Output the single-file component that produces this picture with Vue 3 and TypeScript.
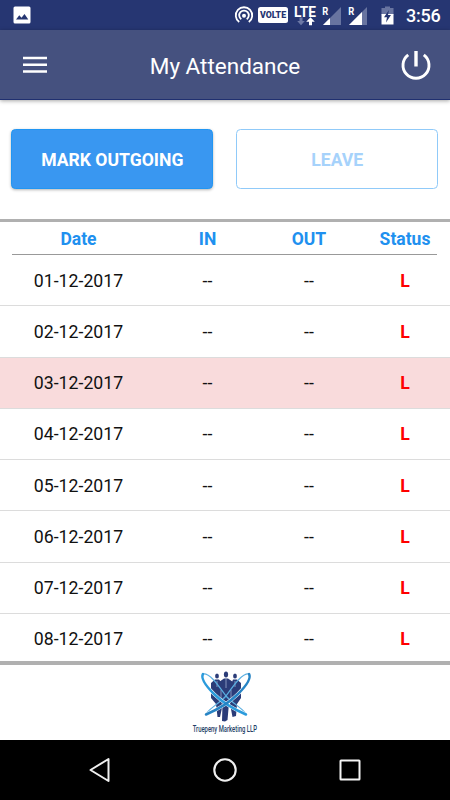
<script setup lang="ts">
interface AttendanceRow {
  date: string
  timeIn: string
  timeOut: string
  status: string
  holiday: boolean
}

const columns: string[] = ['Date', 'IN', 'OUT', 'Status']

const rows: AttendanceRow[] = Array.from({ length: 8 }, (_, i) => ({
  date: `0${i + 1}-12-2017`,
  timeIn: '--',
  timeOut: '--',
  status: 'L',
  holiday: i === 2,
}))
</script>

<template>
  <div class="screen">
    <div class="status-bar">
      <svg class="picture" width="18" height="18" viewBox="0 0 18 18">
        <rect x="0.5" y="0.5" width="17" height="17" rx="1.5" fill="#fff" />
        <path d="M3 13.5 6.3 9.3 8.5 11.8 11.5 8 15.3 13.5Z" fill="#263672" />
      </svg>
      <svg class="hotspot" width="20" height="20" viewBox="0 0 20 20">
        <g fill="none" stroke="#fff" stroke-width="1.8">
          <path d="M5.2 17.1A8.2 8.2 0 1 1 14.8 17.1" />
          <path d="M7.3 14.3A4.8 4.8 0 1 1 12.7 14.3" />
        </g>
        <circle cx="10" cy="10.8" r="2" fill="#fff" />
      </svg>
      <span class="volte">VOLTE</span>
      <svg class="lte" width="24" height="22" viewBox="0 0 24 22">
        <text x="1" y="12.5" class="lte-label" textLength="22" lengthAdjust="spacingAndGlyphs">LTE</text>
        <path d="M6.5 13.5h3v3.5h2.3L8 21.3 4.2 17h2.3Z" fill="#6c78a5" />
        <path d="M16 21.3v-3.5h-2.8L17.5 13.3 21.8 17.8H19v3.5Z" fill="#fff" />
      </svg>
      <svg class="signal" width="20" height="20" viewBox="0 0 20 20">
        <path d="M19 1V19H1Z" fill="#6874a0" />
        <path d="M8 12V19H1Z" fill="#fff" />
        <text x="0.3" y="9" class="roam" textLength="6" lengthAdjust="spacingAndGlyphs">R</text>
      </svg>
      <svg class="signal second" width="20" height="20" viewBox="0 0 20 20">
        <path d="M19 1V19H1Z" fill="#6874a0" />
        <path d="M14 6V19H1Z" fill="#fff" />
        <text x="0.3" y="9" class="roam" textLength="6" lengthAdjust="spacingAndGlyphs">R</text>
      </svg>
      <svg class="battery" width="13" height="19" viewBox="0 0 13 19">
        <path d="M4 0.5h5V2h3.5v7h-12V2H4Z" fill="#6874a0" />
        <path d="M0.5 8h12v10.5h-12Z" fill="#fff" />
        <path d="M8 4 3 11.3h3L5 16.5 10 9H7Z" fill="#263672" />
      </svg>
      <span class="clock">3:56</span>
    </div>

    <header class="app-bar">
      <svg class="menu" width="24" height="18" viewBox="0 0 24 18">
        <path d="M0 2H24M0 8.7H24M0 15.4H24" stroke="#fff" stroke-width="2.5" />
      </svg>
      <h1 class="title">My Attendance</h1>
      <svg class="power" width="30" height="30" viewBox="0 0 30 30">
        <path d="M7.2 4.9A13 13 0 1 0 22.8 4.9" fill="none" stroke="#fff" stroke-width="2.9" />
        <path d="M15 1V16.5" stroke="#fff" stroke-width="3.4" />
      </svg>
    </header>

    <section class="actions">
      <button class="btn primary" type="button">MARK OUTGOING</button>
      <button class="btn outline" type="button">LEAVE</button>
    </section>

    <main class="attendance">
      <div class="grid head">
        <span v-for="name in columns" :key="name">{{ name }}</span>
      </div>
      <div v-for="row in rows" :key="row.date" class="grid row" :class="{ holiday: row.holiday }">
        <span>{{ row.date }}</span>
        <span>{{ row.timeIn }}</span>
        <span>{{ row.timeOut }}</span>
        <span class="code">{{ row.status }}</span>
      </div>
    </main>

    <footer class="brand">
      <svg width="64" height="53" viewBox="0 0 64 53">
        <g fill="#2b3c78">
          <ellipse cx="23" cy="6" rx="1.9" ry="2.5" />
          <ellipse cx="32" cy="4.5" rx="2.1" ry="2.9" />
          <ellipse cx="41" cy="6" rx="1.9" ry="2.5" />
          <path d="M17 13 21 9.5H25L27 12 28 38 26 47 23.5 47 22 34 17 28Z" />
          <path d="M25 12 30 8.5H34L39 12 38.500 29 35 33 33.500 50 31 51.500 28 51 28.500 34 26 28Z" />
          <path d="M38 12 39 9.500H43L47 13 47 28 43 34 42 46 38.500 47 36 34Z" />
        </g>
        <path d="M32 9V18M23 11V17M41 11V17M27 20V29M37 20V29" stroke="#a9b8da" stroke-width="0.7" />
        <g fill="none">
          <path d="M9 4C16 3 24 15 32 26 39 34 53 41 52 45" stroke="#5aaee0" stroke-width="1.2" />
          <path d="M55 4C48 3 40 15 32 26 25 34 11 41 12 45" stroke="#5aaee0" stroke-width="1.2" />
          <path d="M9 4C6 9 14 18 20 24 28 32 37 38 52 44.5" stroke="#fff" stroke-width="3.4" />
          <path d="M55 4C58 9 50 18 44 24 36 32 27 38 12 44.5" stroke="#fff" stroke-width="3.4" />
          <path d="M9 4C6 9 14 18 20 24 28 32 37 38 52 44.5" stroke="#2b9bdc" stroke-width="2.5" stroke-linecap="round" />
          <path d="M55 4C58 9 50 18 44 24 36 32 27 38 12 44.5" stroke="#2784c4" stroke-width="2.5" stroke-linecap="round" />
        </g>
      </svg>
      <span class="brand-name">Truepeny Marketing LLP</span>
    </footer>

    <nav class="nav-bar">
      <svg width="24" height="26" viewBox="0 0 24 26">
        <path d="M20.5 2V24L2.5 13Z" fill="none" stroke="#f0f0f0" stroke-width="2" stroke-linejoin="round" />
      </svg>
      <svg width="26" height="26" viewBox="0 0 26 26">
        <circle cx="13" cy="13" r="10.7" fill="none" stroke="#f0f0f0" stroke-width="2.1" />
      </svg>
      <svg width="24" height="26" viewBox="0 0 24 26">
        <rect x="2.5" y="3.5" width="19" height="19" rx="0.5" fill="none" stroke="#f4f4f4" stroke-width="2" />
      </svg>
    </nav>
  </div>
</template>

<style>
body {
  margin: 0;
  background: #fff;
}
</style>

<style scoped>
.screen {
  display: flex;
  flex-direction: column;
  box-sizing: border-box;
  width: 450px;
  height: 800px;
  overflow: hidden;
  background: #fff;
  color: #111;
  font-family: Roboto, "Liberation Sans", sans-serif;
}

svg {
  display: block;
  flex: none;
}

.status-bar {
  display: flex;
  align-items: center;
  flex: none;
  box-sizing: border-box;
  height: 30px;
  padding: 0 9px 0 13px;
  background: #263672;
  color: #fff;
}

.hotspot {
  margin-left: auto;
}

.volte {
  box-sizing: border-box;
  width: 30px;
  height: 16px;
  margin-left: 4px;
  border-radius: 2.5px;
  background: #fff;
  color: #263672;
  font-size: 8.8px;
  font-weight: 900;
  line-height: 16px;
  text-align: center;
}

.lte {
  margin-left: 5px;
}

.lte-label {
  fill: #fff;
  font-size: 14px;
  font-weight: 700;
}

.signal {
  margin-left: 5px;
  margin-top: 2px;
}

.signal.second {
  margin-left: 6px;
}

.roam {
  fill: #fff;
  font-size: 11px;
  font-weight: 700;
}

.battery {
  margin-left: 13px;
}

.clock {
  width: 35px;
  margin-left: 12px;
  padding-top: 1px;
  font-size: 18px;
  font-weight: 500;
  line-height: 30px;
  letter-spacing: -0.2px;
}

.app-bar {
  display: flex;
  align-items: center;
  flex: none;
  box-sizing: border-box;
  height: 70px;
  padding: 0 19px 0 23px;
  border-bottom: 1px solid #203070;
  background: #45517f;
  box-shadow: 0 1px 4px rgba(0, 0, 0, 0.35);
  color: #fff;
}

.title {
  flex: 1;
  margin: 3px 0 0 2px;
  font-size: 22.5px;
  font-weight: 400;
  line-height: 30px;
  text-align: center;
}

.actions {
  display: grid;
  grid-template-columns: 202px 202px;
  column-gap: 23px;
  flex: none;
  box-sizing: border-box;
  height: 119px;
  padding: 29px 0 0 11.3px;
}

.btn {
  box-sizing: border-box;
  height: 60px;
  padding: 2px 0 0;
  border-radius: 4.5px;
  font-family: inherit;
  font-size: 17.6px;
  font-weight: 700;
}

.primary {
  border: 1px solid #2196f3;
  background: #3997f1;
  box-shadow: 0 1px 3px rgba(0, 0, 0, 0.3);
  color: #fff;
}

.outline {
  border: 1px solid #90caf9;
  background: #fff;
  color: #a6d2fb;
}

.attendance {
  flex: none;
  box-sizing: border-box;
  height: 446px;
  overflow: hidden;
  border-top: 3.5px solid #b0b0b0;
  border-bottom: 4px solid #b0b0b0;
}

.grid {
  display: grid;
  grid-template-columns: 157px 101px 102px 90px;
  align-items: center;
  box-sizing: border-box;
  text-align: center;
}

.head {
  grid-template-columns: 145px 101px 102px 90px;
  width: 425px;
  height: 33px;
  margin-left: 12px;
  padding-top: 1px;
  border-bottom: 1px solid #999;
  color: #2090ef;
  font-size: 17.5px;
  font-weight: 700;
}

.head span:first-child {
  padding-right: 12px;
}

.row {
  height: 51.25px;
  padding-top: 1px;
  border-bottom: 1px solid #dcdcdc;
  font-size: 17.7px;
}

.holiday {
  background: #f9dbdc;
}

.code {
  color: #f00;
  font-weight: 700;
}

.brand {
  display: flex;
  flex-direction: column;
  align-items: center;
  flex: none;
  box-sizing: border-box;
  height: 75px;
  padding-top: 5px;
}

.brand svg {
  margin-left: 2px;
}

.brand-name {
  flex: none;
  color: #243f68;
  font-size: 9.5px;
  font-weight: 500;
  line-height: 12px;
  white-space: nowrap;
  transform: scaleX(0.62);
}

.nav-bar {
  display: flex;
  align-items: center;
  justify-content: space-between;
  flex: none;
  box-sizing: border-box;
  height: 60px;
  padding: 0 88px;
  background: #000;
}
</style>
